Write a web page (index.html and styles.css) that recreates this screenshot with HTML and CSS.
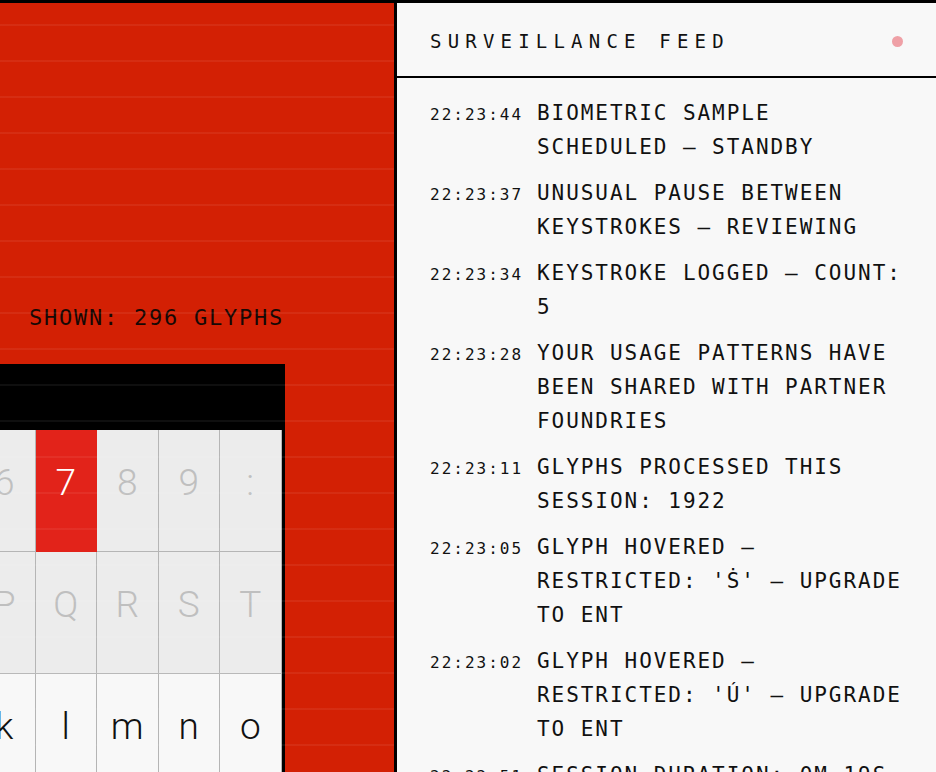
FILE: index.html
```html
<!DOCTYPE html>
<html lang="en">
<head>
    <meta charset="UTF-8">
    <meta name="viewport" content="width=device-width, initial-scale=1.0">
    <title>Glyph Browser</title>
    <link rel="stylesheet" href="styles.css">
</head>
<body>
<div class="app">
    <section class="stage">
        <div class="stage-meta">SHOWN: 296 GLYPHS</div>

        <div class="glyph-panel">
            <div class="glyph-bar"></div>
            <div class="glyph-grid">
                <div class="cell">6</div>
                <div class="cell active">7</div>
                <div class="cell">8</div>
                <div class="cell">9</div>
                <div class="cell">:</div>

                <div class="cell">P</div>
                <div class="cell">Q</div>
                <div class="cell">R</div>
                <div class="cell">S</div>
                <div class="cell">T</div>

                <div class="cell open">k</div>
                <div class="cell open">l</div>
                <div class="cell open">m</div>
                <div class="cell open">n</div>
                <div class="cell open">o</div>
            </div>
        </div>
    </section>

    <aside class="feed">
        <header class="feed-head">
            <h2>SURVEILLANCE FEED</h2>
            <span class="feed-dot"></span>
        </header>
        <ul class="feed-list">
            <li><time>22:23:44</time><p>BIOMETRIC SAMPLE SCHEDULED — STANDBY</p></li>
            <li><time>22:23:37</time><p>UNUSUAL PAUSE BETWEEN KEYSTROKES — REVIEWING</p></li>
            <li><time>22:23:34</time><p>KEYSTROKE LOGGED — COUNT: 5</p></li>
            <li><time>22:23:28</time><p>YOUR USAGE PATTERNS HAVE BEEN SHARED WITH PARTNER FOUNDRIES</p></li>
            <li><time>22:23:11</time><p>GLYPHS PROCESSED THIS SESSION: 1922</p></li>
            <li><time>22:23:05</time><p>GLYPH HOVERED — RESTRICTED: 'Ṡ' — UPGRADE TO ENT</p></li>
            <li><time>22:23:02</time><p>GLYPH HOVERED — RESTRICTED: 'Ú' — UPGRADE TO ENT</p></li>
            <li><time>22:22:51</time><p>SESSION DURATION: 0M 19S</p></li>
        </ul>
    </aside>
</div>
</body>
</html>
```

FILE: styles.css
```css
html, body {
    margin: 0;
    height: 100%;
    overflow: hidden;
}

body {
    box-sizing: border-box;
    border-top: 3px solid #000;
    font-family: "DejaVu Sans Mono", monospace;
    color: #111;
}

.app {
    display: flex;
    height: 100%;
}

/* left side: red stage with the glyph table */
.stage {
    position: relative;
    width: 394px;
    flex-shrink: 0;
    background-color: #d32004;
    overflow: hidden;
}

/* faint scanlines across the stage */
.stage::after {
    content: "";
    position: absolute;
    inset: 0;
    pointer-events: none;
    background: repeating-linear-gradient(
        to bottom,
        transparent 0 21px,
        rgba(255,255,255,0.06) 21px 23px,
        transparent 23px 36px
    );
}

.stage-meta {
    margin: 300px 0 0 29px;
    font-size: 22px;
    line-height: 30px;
    letter-spacing: 1.75px;
    color: #170805;
}

.glyph-panel {
    width: 307.5px;
    margin: 31px 0 0 -29px;
    border: 3px solid #000;
    background-color: #000;
}

.glyph-bar {
    height: 63px;
}

.glyph-grid {
    display: grid;
    grid-template-columns: repeat(5, 61.5px);
}

.cell {
    box-sizing: border-box;
    height: 122px;
    padding-bottom: 16px;
    display: flex;
    align-items: center;
    justify-content: center;
    border-right: 1px solid #b5b5b5;
    border-bottom: 1px solid #b5b5b5;
    background-color: #ececec;
    color: #bfbfbf;
    font-family: Roboto, sans-serif;
    font-weight: 300;
    font-size: 37px;
}

.cell.open {
    background-color: #f8f8f8;
    color: #111;
}

.cell.active {
    background-color: #e2231a;
    border-color: #e2231a;
    color: #fff;
}

/* right side: the feed */
.feed {
    flex: 1;
    min-width: 0;
    border-left: 3px solid #000;
    background-color: #f8f8f8;
    overflow: hidden;
}

.feed-head {
    height: 73px;
    padding: 0 33px 0 33px;
    display: flex;
    align-items: center;
    justify-content: space-between;
    border-bottom: 2px solid #000;
}

.feed-head h2 {
    margin: 0;
    margin-top: 2px;
    font-size: 19px;
    font-weight: normal;
    letter-spacing: 6.2px;
}

.feed-dot {
    width: 11px;
    height: 11px;
    margin-top: 3px;
    border-radius: 50%;
    background-color: #efa0a6;
}

.feed-list {
    list-style: none;
    margin: 0;
    padding: 18px 22px 0 33px;
}

.feed-list li {
    display: flex;
    align-items: baseline;
    margin-bottom: 12px;
}

.feed-list time {
    flex: 0 0 107px;
    font-size: 16px;
    letter-spacing: 2px;
}

.feed-list p {
    flex: 1;
    margin: 0;
    font-size: 21px;
    line-height: 34px;
    letter-spacing: 1.95px;
}
```
